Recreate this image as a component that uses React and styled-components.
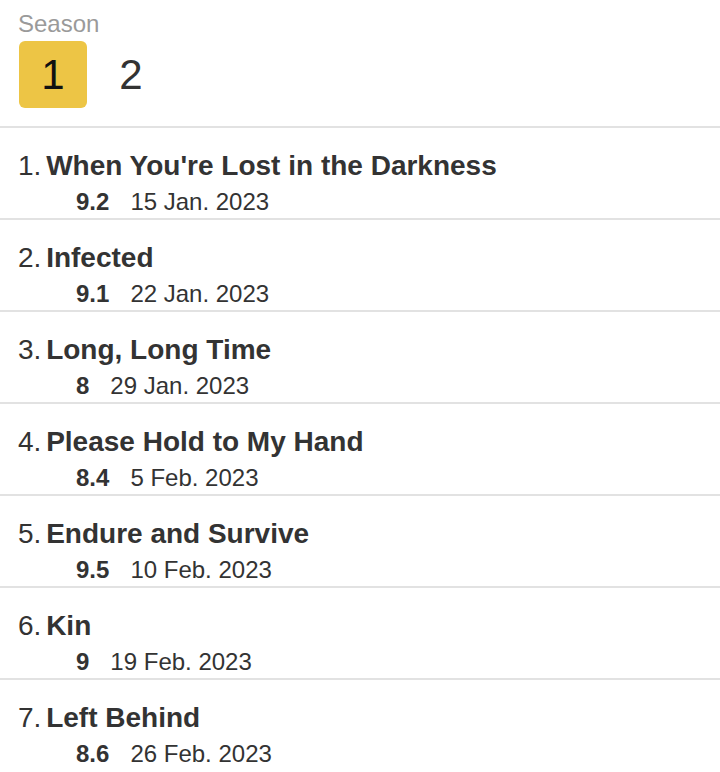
import styled, { createGlobalStyle } from 'styled-components';

const GlobalStyle = createGlobalStyle`
  body {
    margin: 0;
    background: #fff;
    font-family: 'Liberation Sans', Arial, sans-serif;
    color: #333;
  }
`;

const episodes = [
  { title: "When You're Lost in the Darkness", rating: '9.2', date: '15 Jan. 2023' },
  { title: 'Infected', rating: '9.1', date: '22 Jan. 2023' },
  { title: 'Long, Long Time', rating: '8', date: '29 Jan. 2023' },
  { title: 'Please Hold to My Hand', rating: '8.4', date: '5 Feb. 2023' },
  { title: 'Endure and Survive', rating: '9.5', date: '10 Feb. 2023' },
  { title: 'Kin', rating: '9', date: '19 Feb. 2023' },
  { title: 'Left Behind', rating: '8.6', date: '26 Feb. 2023' }
];

export default function App() {
  return (
    <Page>
      <GlobalStyle />
      <Header>
        <SeasonLabel>Season</SeasonLabel>
        <SeasonTabs>
          <SeasonButton active>1</SeasonButton>
          <SeasonButton>2</SeasonButton>
        </SeasonTabs>
      </Header>
      <List>
        {episodes.map((ep, i) => (
          <Episode key={ep.title}>
            <Title>
              <Number>{i + 1}.</Number> {ep.title}
            </Title>
            <Meta>
              <Rating>{ep.rating}</Rating>
              <Date>{ep.date}</Date>
            </Meta>
          </Episode>
        ))}
      </List>
    </Page>
  );
}

const Page = styled.div`
  width: 720px;
  height: 772px;
  overflow: hidden;
`;

const Header = styled.div`
  padding: 10px 19px 18px;
`;

const SeasonLabel = styled.div`
  font-size: 24px;
  line-height: 28px;
  color: #9a9a9a;
  margin-left: -1px;
`;

const SeasonTabs = styled.div`
  display: flex;
  gap: 10px;
  margin-top: 3px;
`;

const SeasonButton = styled.div`
  width: 68px;
  height: 67px;
  border-radius: 6px;
  display: flex;
  align-items: center;
  justify-content: center;
  font-size: 42px;
  color: ${(props) => (props.active ? '#111' : '#333')};
  background-color: ${(props) => (props.active ? '#EDC545' : 'transparent')};
`;

const List = styled.div``;

const Episode = styled.div`
  border-top: 2px solid #e2e2e2;
  padding: 23px 18px 0;
  box-sizing: border-box;
  height: 92px;
`;

const Title = styled.div`
  font-size: 28px;
  line-height: 30px;
  font-weight: 700;
  color: #333;
  white-space: nowrap;
`;

const Number = styled.span`
  font-weight: 400;
  margin-right: -3px;
`;

const Meta = styled.div`
  margin-top: 5px;
  padding-left: 58px;
  font-size: 24px;
  line-height: 32px;
  color: #333;
`;

const Rating = styled.span`
  font-weight: 700;
  margin-right: 21px;
`;

const Date = styled.span``;
